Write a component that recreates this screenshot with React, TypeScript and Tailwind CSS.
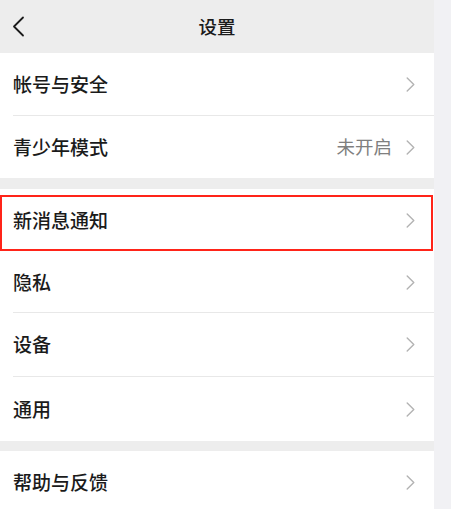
import React from "react";

const font = { fontFamily: '"Noto Sans CJK SC", "Noto Sans", sans-serif' };

function Chevron() {
  return (
    <svg width="9" height="15" viewBox="0 0 9 15" fill="none" className="shrink-0">
      <path d="M1.2 1 L7.8 7.5 L1.2 14" stroke="#b3b3b3" strokeWidth="1.4" strokeLinecap="round" strokeLinejoin="round" />
    </svg>
  );
}

function Row({
  label,
  value,
  divider = true,
  height = "h-[63px]",
}: {
  label: string;
  value?: string;
  divider?: boolean;
  height?: string;
}) {
  return (
    <div className={`flex shrink-0 bg-white pl-[13px] ${height}`}>
      <div
        className={`flex flex-1 items-center justify-between pr-[19px] ${
          divider ? "border-b border-[#e8e8e8]" : ""
        }`}
      >
        <span className="text-[19px] font-medium text-[#1b1b1b]">{label}</span>
        <div className="flex items-center gap-[14px]">
          {value && <span className="text-[18.5px] text-[#7f7f7f]">{value}</span>}
          <Chevron />
        </div>
      </div>
    </div>
  );
}

export default function App() {
  return (
    <div className="flex h-[509px] w-[451px] overflow-hidden bg-[#f1f1f4]" style={font}>
      <div className="flex w-[434px] flex-col bg-[#ededed]">
        {/* header */}
        <div className="relative flex h-[53px] shrink-0 items-center justify-center">
          <svg
            width="13"
            height="21"
            viewBox="0 0 13 21"
            fill="none"
            className="absolute left-[12px] top-[16px]"
          >
            <path d="M11 1.5 L2 10.5 L11 19.5" stroke="#1b1b1b" strokeWidth="1.8" strokeLinecap="round" strokeLinejoin="round" />
          </svg>
          <span className="text-[18.5px] font-medium text-[#1b1b1b]">设置</span>
        </div>

        <Row label="帐号与安全" />
        <Row label="青少年模式" value="未开启" divider={false} height="h-[62px]" />

        <div className="h-[11px] shrink-0" />

        <div className="relative shrink-0">
          <Row label="新消息通知" divider={false} />
          <div className="pointer-events-none absolute left-0 right-[1px] top-[6px] bottom-[1px] border-2 border-[#ff2419]" />
        </div>
        <Row label="隐私" height="h-[61px]" />
        <Row label="设备" height="h-[64px]" />
        <Row label="通用" divider={false} height="h-[64px]" />

        <div className="h-[10px] shrink-0" />

        <Row label="帮助与反馈" divider={false} height="h-[63px]" />
        <div className="flex-1 bg-white" />
      </div>
      <div className="flex-1" />
    </div>
  );
}
